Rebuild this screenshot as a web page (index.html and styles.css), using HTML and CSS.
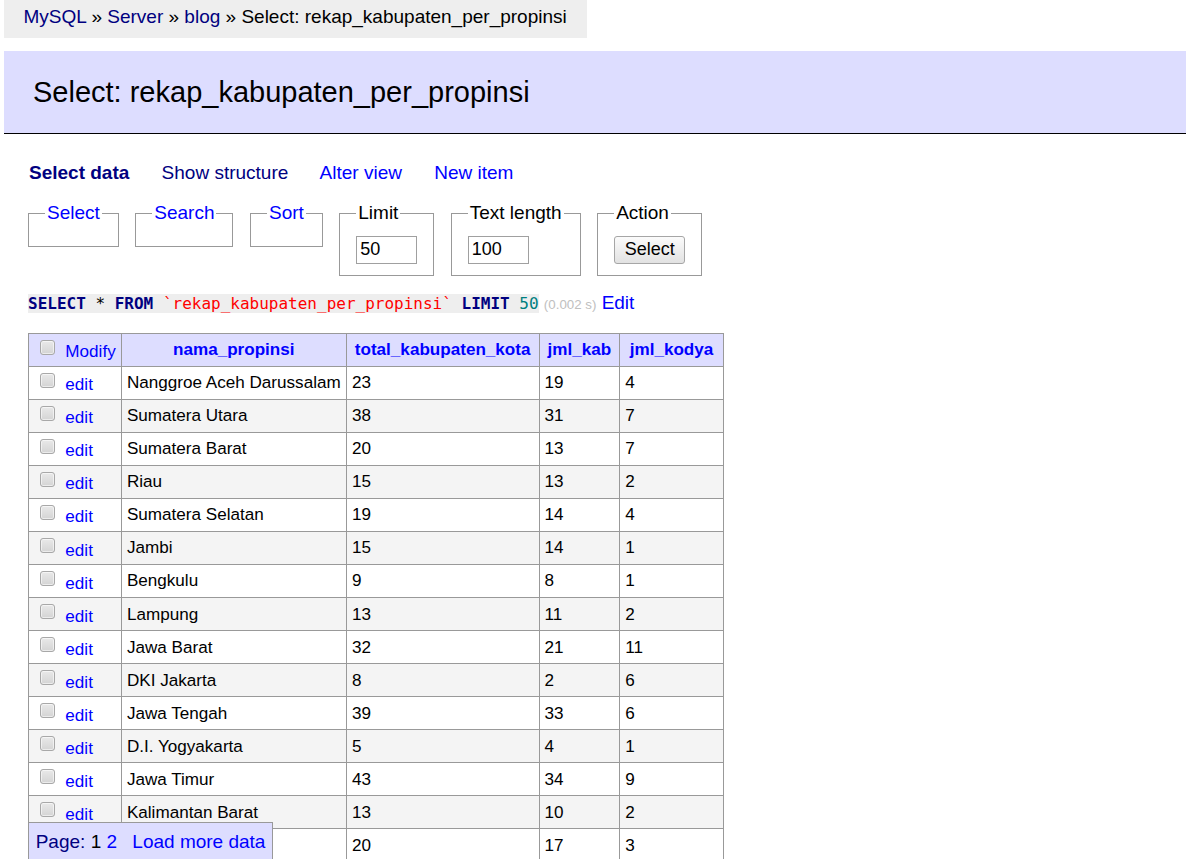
FILE: index.html
```html
<!DOCTYPE html>
<html lang="en">
<head>
<meta charset="utf-8">
<title>Select: rekap_kabupaten_per_propinsi - Server - Adminer</title>
<link rel="stylesheet" href="styles.css">
</head>
<body>
<p class="breadcrumb"><a class="visited" href="#">MySQL</a> » <a class="visited" href="#">Server</a> » <a class="visited" href="#">blog</a> » Select: rekap_kabupaten_per_propinsi</p>
<div class="content">
<h2 class="title">Select: rekap_kabupaten_per_propinsi</h2>
<p class="links"><a class="visited active" href="#">Select data</a>
<a class="visited" href="#">Show structure</a>
<a href="#">Alter view</a>
<a href="#">New item</a></p>
<form class="select-form">
<fieldset class="fs fs-empty"><legend><a href="#">Select</a></legend></fieldset>
<fieldset class="fs fs-empty"><legend><a href="#">Search</a></legend></fieldset>
<fieldset class="fs fs-empty"><legend><a href="#">Sort</a></legend></fieldset>
<fieldset class="fs"><legend>Limit</legend><input class="field" type="text" value="50"></fieldset>
<fieldset class="fs"><legend>Text length</legend><input class="field" type="text" value="100"></fieldset>
<fieldset class="fs"><legend>Action</legend><button class="btn" type="button">Select</button></fieldset>
</form>
<p class="sql"><code class="code"><span class="kw">SELECT</span> * <span class="kw">FROM</span> <span class="bac">`rekap_kabupaten_per_propinsi`</span> <span class="kw">LIMIT</span> <span class="num">50</span></code> <span class="time">(0.002 s)</span> <a href="#">Edit</a></p>
<table class="data">
<thead>
<tr><td class="mod"><input class="check" type="checkbox"> <a href="#">Modify</a></td><th><a href="#">nama_propinsi</a></th><th><a href="#">total_kabupaten_kota</a></th><th><a href="#">jml_kab</a></th><th class="last"><a href="#">jml_kodya</a></th></tr>
</thead>
<tbody>
<tr><td class="mod"><input class="check" type="checkbox"> <a href="#">edit</a></td><td>Nanggroe Aceh Darussalam</td><td>23</td><td>19</td><td>4</td></tr>
<tr><td class="mod"><input class="check" type="checkbox"> <a href="#">edit</a></td><td>Sumatera Utara</td><td>38</td><td>31</td><td>7</td></tr>
<tr><td class="mod"><input class="check" type="checkbox"> <a href="#">edit</a></td><td>Sumatera Barat</td><td>20</td><td>13</td><td>7</td></tr>
<tr><td class="mod"><input class="check" type="checkbox"> <a href="#">edit</a></td><td>Riau</td><td>15</td><td>13</td><td>2</td></tr>
<tr><td class="mod"><input class="check" type="checkbox"> <a href="#">edit</a></td><td>Sumatera Selatan</td><td>19</td><td>14</td><td>4</td></tr>
<tr><td class="mod"><input class="check" type="checkbox"> <a href="#">edit</a></td><td>Jambi</td><td>15</td><td>14</td><td>1</td></tr>
<tr><td class="mod"><input class="check" type="checkbox"> <a href="#">edit</a></td><td>Bengkulu</td><td>9</td><td>8</td><td>1</td></tr>
<tr><td class="mod"><input class="check" type="checkbox"> <a href="#">edit</a></td><td>Lampung</td><td>13</td><td>11</td><td>2</td></tr>
<tr><td class="mod"><input class="check" type="checkbox"> <a href="#">edit</a></td><td>Jawa Barat</td><td>32</td><td>21</td><td>11</td></tr>
<tr><td class="mod"><input class="check" type="checkbox"> <a href="#">edit</a></td><td>DKI Jakarta</td><td>8</td><td>2</td><td>6</td></tr>
<tr><td class="mod"><input class="check" type="checkbox"> <a href="#">edit</a></td><td>Jawa Tengah</td><td>39</td><td>33</td><td>6</td></tr>
<tr><td class="mod"><input class="check" type="checkbox"> <a href="#">edit</a></td><td>D.I. Yogyakarta</td><td>5</td><td>4</td><td>1</td></tr>
<tr><td class="mod"><input class="check" type="checkbox"> <a href="#">edit</a></td><td>Jawa Timur</td><td>43</td><td>34</td><td>9</td></tr>
<tr><td class="mod"><input class="check" type="checkbox"> <a href="#">edit</a></td><td>Kalimantan Barat</td><td>13</td><td>10</td><td>2</td></tr>
<tr><td class="mod"><input class="check" type="checkbox"> <a href="#">edit</a></td><td>Kalimantan Timur</td><td>20</td><td>17</td><td>3</td></tr>
<tr><td class="mod"><input class="check" type="checkbox"> <a href="#">edit</a></td><td>Kalimantan Selatan</td><td>13</td><td>11</td><td>2</td></tr>
<tr><td class="mod"><input class="check" type="checkbox"> <a href="#">edit</a></td><td>Kalimantan Tengah</td><td>14</td><td>13</td><td>1</td></tr>
<tr><td class="mod"><input class="check" type="checkbox"> <a href="#">edit</a></td><td>Bali</td><td>9</td><td>8</td><td>1</td></tr>
</tbody>
</table>
<p class="pages"><a class="visited" href="#">Page:</a> <span class="cur">1</span> <a href="#">2</a> <a class="loadmore" href="#">Load more data</a></p>
</div>
</body>
</html>
```
FILE: styles.css
```css
html, body {
  margin: 0;
  padding: 0;
}
body {
  color: #000;
  background: #fff;
  font-family: "Liberation Sans", Arial, sans-serif;
  font-size: 19px;
  line-height: 1.25;
}
a {
  color: #0000ff;
  text-decoration: none;
}
a.visited {
  color: #000080;
}
.active {
  font-weight: bold;
}
.breadcrumb {
  margin: 0 0 0 4px;
  width: fit-content;
  height: 38px;
  line-height: 34px;
  padding: 0 20px 0 19.5px;
  background: #eee;
  white-space: nowrap;
}
.content {
  margin: 0 0 0 28px;
  padding: 13px 0 20px 0;
}
.title {
  font-size: 29px;
  font-weight: normal;
  line-height: 36px;
  margin: 0 0 27px -24px;
  padding: 23px 29px;
  border-bottom: 1px solid #000;
  background: #ddf;
  color: #000;
}
.links {
  margin: 0 0 0 1px;
}
.links a {
  margin-right: 27px;
  white-space: nowrap;
}
.select-form {
  margin: 0;
}
.fs {
  display: inline-block;
  vertical-align: top;
  margin: 16.5px 11.2px 0 0;
  padding: 9.5px 16px 10.5px;
  border: 1px solid #999;
  min-width: 0;
}
.fs legend {
  padding: 0 2px;
}
.fs-empty {
  padding-bottom: 11.6px;
}
.field {
  box-sizing: border-box;
  width: 61px;
  height: 28px;
  margin: 1px 0;
  padding: 0 3px;
  border: 1px solid #a0a0a0;
  border-radius: 0;
  font-family: "Liberation Sans", Arial, sans-serif;
  font-size: 18px;
  vertical-align: middle;
  color: #000;
  background: #fff;
}
.btn {
  box-sizing: border-box;
  height: 28px;
  margin: 1px 0;
  padding: 0 9.5px;
  border: 1px solid #a6a6a6;
  border-radius: 3px;
  background: linear-gradient(#fbfbfb, #e2e2e2);
  font-family: "Liberation Sans", Arial, sans-serif;
  font-size: 18px;
  color: #000;
  vertical-align: middle;
}
.sql {
  margin: 15.2px 20px 0 0;
}
.code {
  font-family: "DejaVu Sans Mono", monospace;
  font-size: 16px;
  background: #eee;
}
.kw {
  color: #000080;
  font-weight: bold;
}
.bac {
  color: red;
}
.num {
  color: #007f7f;
}
.time {
  color: silver;
  font-size: 13.3px;
}
.data {
  margin: 18px 20px 0 0;
  border-collapse: collapse;
  font-size: 17.1px;
}
.data td, .data th {
  border: 1px solid #999;
  padding: 3.4px 5.1px;
}
.data th {
  text-align: center;
  padding: 3.4px 8px;
  background: #ddf;
}
.data th.last {
  padding: 3.4px 9.5px;
}
.data thead td {
  background: #ddf;
}
.data tbody tr:nth-child(2n) {
  background: #f4f4f4;
}
.mod {
  white-space: nowrap;
}
.check {
  -webkit-appearance: none;
  appearance: none;
  box-sizing: border-box;
  display: inline-block;
  width: 15px;
  height: 15px;
  margin: 2.4px 5.5px 2.5px 6px;
  padding: 0;
  border: 1px solid #a8a8a8;
  border-radius: 3px;
  background: linear-gradient(#e9e9e9, #d4d4d4);
  box-shadow: inset 0 0 0 1px rgba(255, 255, 255, 0.55);
  vertical-align: baseline;
}
.pages {
  position: fixed;
  left: 28px;
  bottom: -2px;
  margin: 0;
  padding: 6.7px;
  background: #ddf;
  border: 1px solid #999;
  white-space: nowrap;
}
.loadmore {
  margin-left: 10px;
}
```
